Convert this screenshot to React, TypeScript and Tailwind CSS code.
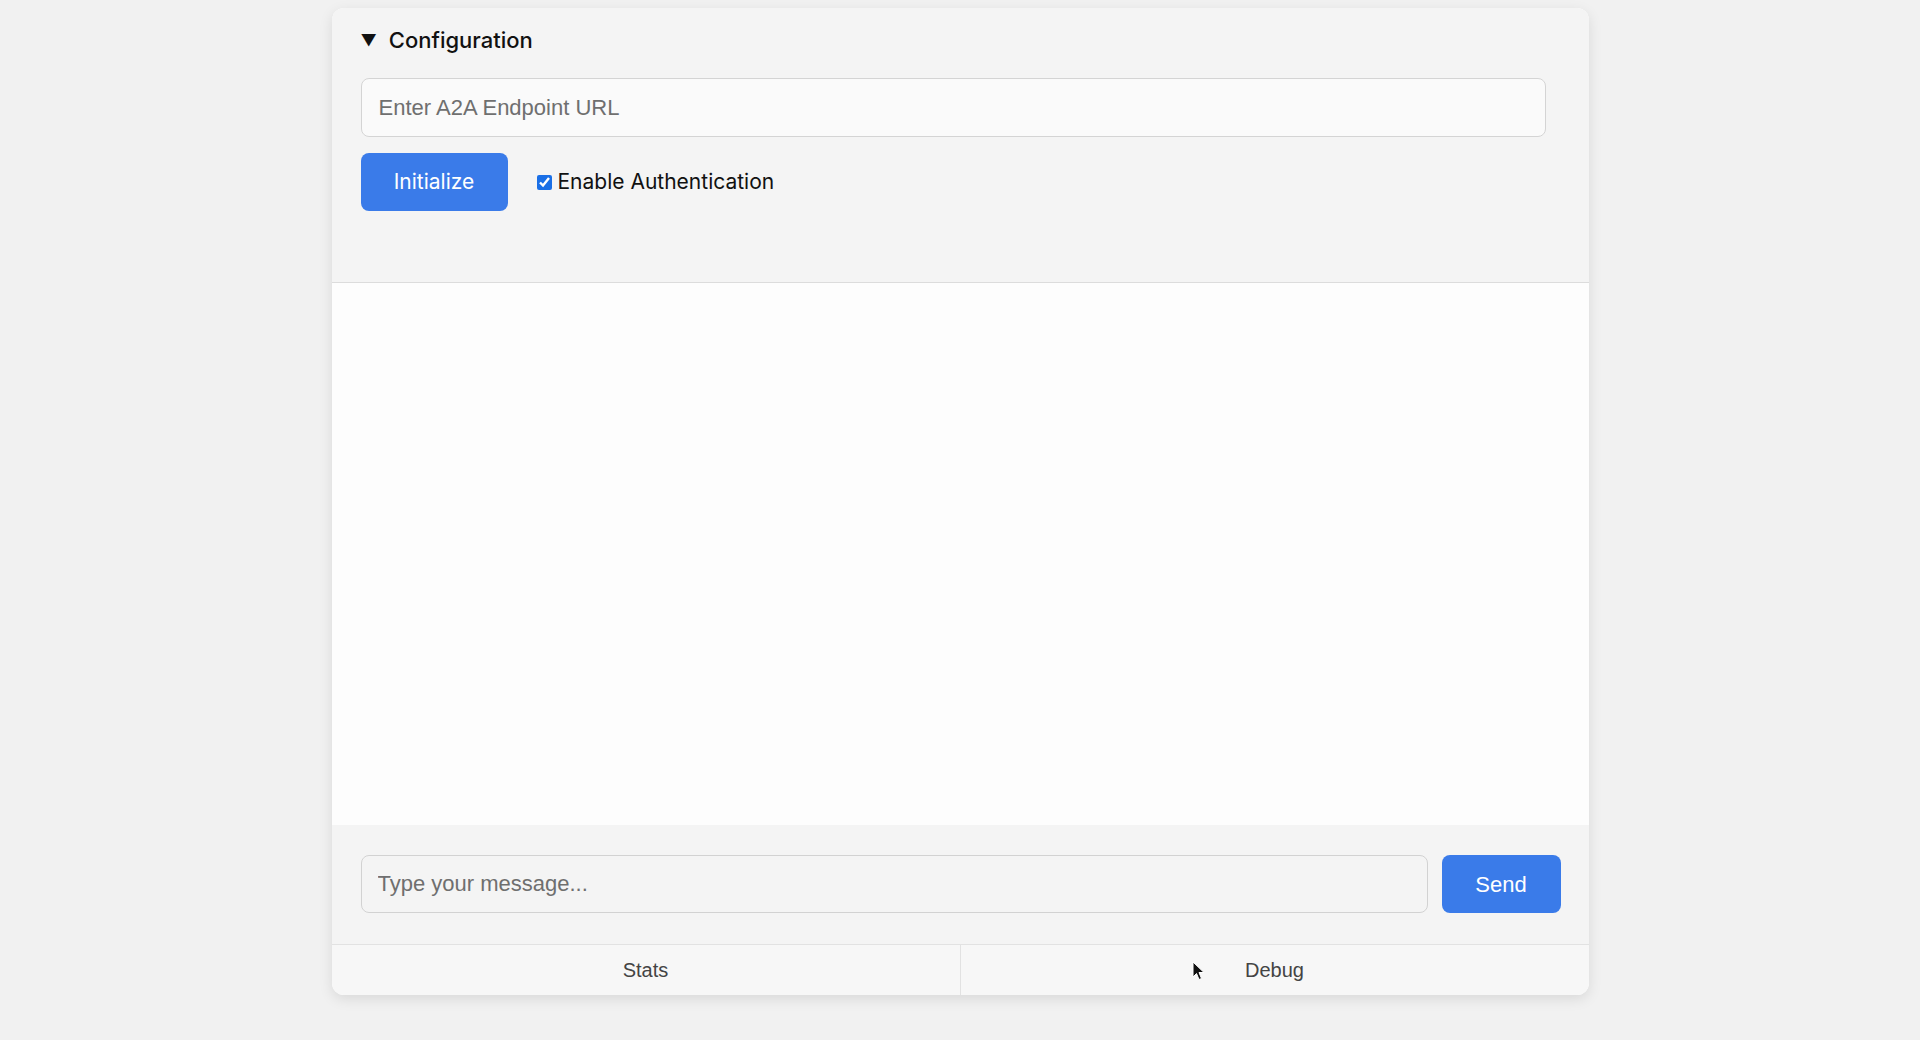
import React, { useState } from 'react';

const sans = "font-['Inter','Roboto','Noto_Sans',sans-serif]";
const arial = "font-['Liberation_Sans','Arial',sans-serif]";

const App: React.FC = () => {
  const [open, setOpen] = useState(true);
  const [auth, setAuth] = useState(true);
  const [tab, setTab] = useState<'stats' | 'debug'>('stats');

  return (
    <div className="relative min-h-screen w-full bg-[#f1f1f1] pt-2">
      <div className="mx-auto flex w-[1257px] flex-col overflow-hidden rounded-xl bg-white shadow-[0_4px_14px_rgba(0,0,0,0.10)]">
        {/* Config */}
        <section className="h-[275px] border-b border-[#dcdcdc] bg-[#f4f4f4] pl-[29px] pr-[43px] pt-[19px]">
          <button
            onClick={() => setOpen(!open)}
            className={`flex items-center gap-[12px] text-[22px] font-medium leading-[26px] text-[#111] ${sans}`}
          >
            <span className="text-[16px] leading-none">▼</span>
            <span>Configuration</span>
          </button>
          {open && (
            <>
              <input
                placeholder="Enter A2A Endpoint URL"
                className={`mt-[25px] h-[59px] w-full rounded-lg border border-[#d4d4d4] bg-[#fafafa] px-[17px] text-[22px] text-[#222] placeholder:text-[#6f6f6f] outline-none ${arial}`}
              />
              <div className="mt-[16px] flex items-center">
                <button
                  className={`h-[58px] w-[147px] rounded-lg bg-[#3a7be9] text-[21px] text-white ${sans}`}
                >
                  Initialize
                </button>
                <label className={`ml-[29px] flex items-center gap-[6px] text-[21px] text-[#111] ${sans}`}>
                  <input
                    type="checkbox"
                    checked={auth}
                    onChange={() => setAuth(!auth)}
                    className="h-[15px] w-[15px] accent-[#1a6fe6]"
                  />
                  Enable Authentication
                </label>
              </div>
            </>
          )}
        </section>

        {/* Messages */}
        <div className="h-[542px] bg-[#fdfdfd]" />

        {/* Input */}
        <div className="flex h-[119px] items-start gap-[14px] bg-[#f4f4f4] pl-[29px] pr-[28px] pt-[30px]">
          <input
            placeholder="Type your message..."
            className={`h-[58px] flex-1 rounded-lg border border-[#d2d2d2] bg-[#f4f4f4] px-[16px] text-[22px] text-[#222] placeholder:text-[#6f6f6f] outline-none ${arial}`}
          />
          <button className={`h-[58px] w-[119px] rounded-lg bg-[#3a7be9] text-[22px] font-medium text-white ${arial}`}>
            Send
          </button>
        </div>

        {/* Tabs */}
        <div className={`flex h-[51px] border-t border-[#e2e2e2] bg-[#f7f7f7] text-[20px] text-[#444] ${arial}`}>
          <button onClick={() => setTab('stats')} className="flex-1 border-r border-[#e2e2e2]">
            Stats
          </button>
          <button onClick={() => setTab('debug')} className="flex-1">
            Debug
          </button>
        </div>
      </div>

      {/* mouse pointer */}
      <svg className="absolute left-[1192px] top-[961px]" width="14" height="20" viewBox="0 0 14 20">
        <path d="M1 1 L1 16 L4.5 12.5 L7 18.5 L9.5 17.5 L7 11.5 L12 11.5 Z" fill="#111" stroke="#fff" strokeWidth="1" />
      </svg>
    </div>
  );
};

export default App;
